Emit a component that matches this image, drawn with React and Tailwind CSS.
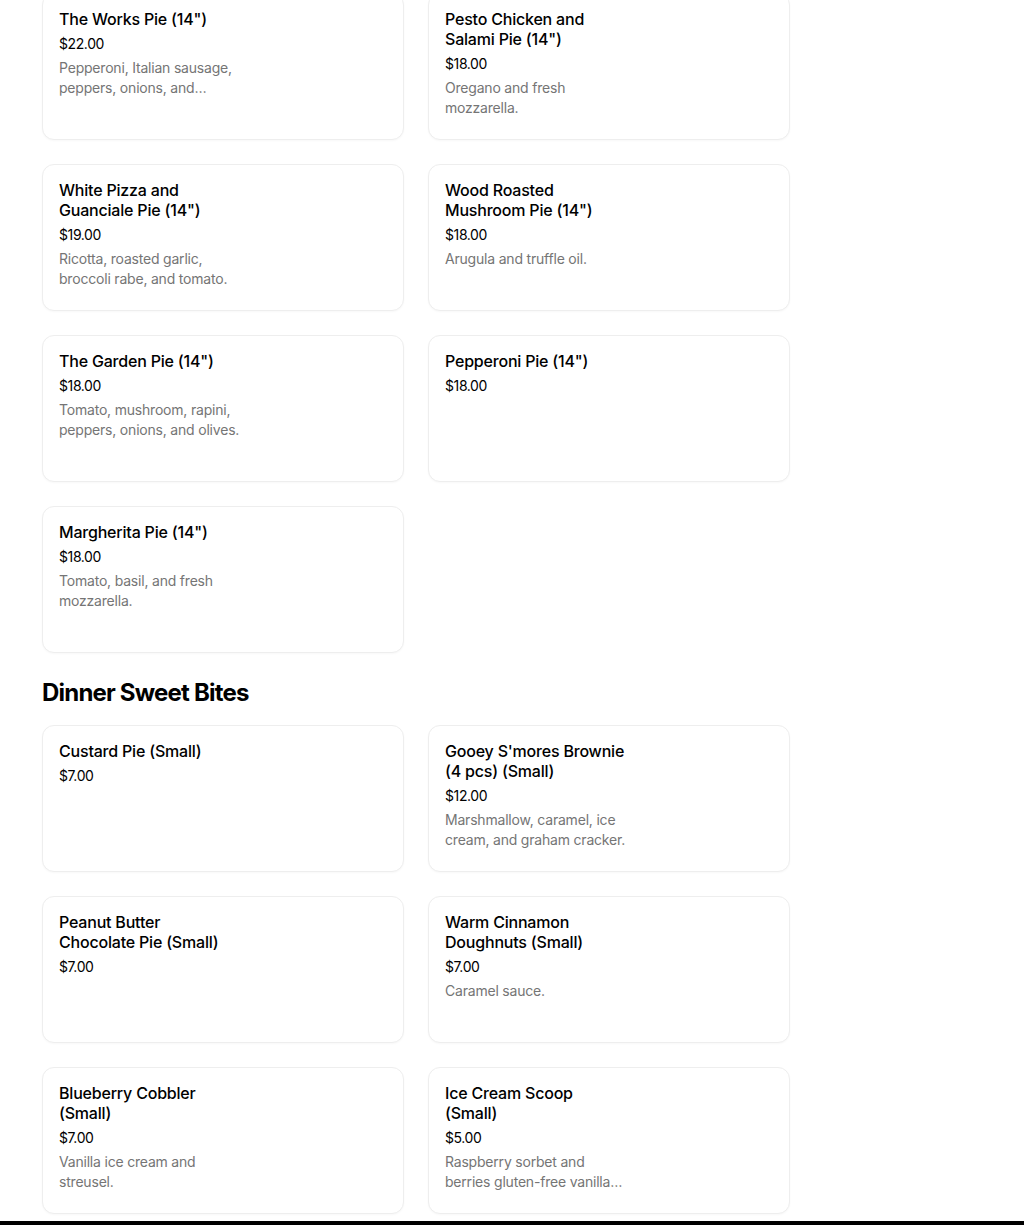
import React from 'react';

const pies = [
  { name: 'The Works Pie (14")', price: '$22.00', desc: 'Pepperoni, Italian sausage, peppers, onions, and mushrooms.' },
  { name: 'Pesto Chicken and Salami Pie (14")', price: '$18.00', desc: 'Oregano and fresh mozzarella.' },
  { name: 'White Pizza and Guanciale Pie (14")', price: '$19.00', desc: 'Ricotta, roasted garlic, broccoli rabe, and tomato.' },
  { name: 'Wood Roasted Mushroom Pie (14")', price: '$18.00', desc: 'Arugula and truffle oil.' },
  { name: 'The Garden Pie (14")', price: '$18.00', desc: 'Tomato, mushroom, rapini, peppers, onions, and olives.' },
  { name: 'Pepperoni Pie (14")', price: '$18.00', desc: '' },
  { name: 'Margherita Pie (14")', price: '$18.00', desc: 'Tomato, basil, and fresh mozzarella.' },
];

const sweets = [
  { name: 'Custard Pie (Small)', price: '$7.00', desc: '' },
  { name: "Gooey S'mores Brownie (4 pcs) (Small)", price: '$12.00', desc: 'Marshmallow, caramel, ice cream, and graham cracker.' },
  { name: 'Peanut Butter Chocolate\u00a0Pie (Small)', price: '$7.00', desc: '' },
  { name: 'Warm Cinnamon Doughnuts (Small)', price: '$7.00', desc: 'Caramel sauce.' },
  { name: 'Blueberry Cobbler (Small)', price: '$7.00', desc: 'Vanilla ice cream and streusel.' },
  { name: 'Ice\u00a0Cream\u00a0Scoop (Small)', price: '$5.00', desc: 'Raspberry sorbet and berries gluten-free vanilla ice cream.' },
];

function ItemCard({ item }) {
  return (
    <div className="h-[147px] rounded-xl border border-[#eeeeee] bg-white px-4 pt-[15px] shadow-[0_1px_2px_rgba(0,0,0,0.03)]">
      <div className="w-[183px]">
        <h3 className="text-[16px] leading-5 font-medium tracking-[-0.2px] text-black">{item.name}</h3>
        <p className="mt-[5px] text-[14px] leading-5 tracking-[-0.4px] text-black">{item.price}</p>
        {item.desc && <p className="mt-1 text-[14px] leading-5 tracking-[-0.2px] text-[#757575] line-clamp-2">{item.desc}</p>}
      </div>
    </div>
  );
}

export default function App() {
  return (
    <div className="min-h-[1225px] bg-white overflow-hidden" style={{ fontFamily: 'Inter, "Noto Sans", sans-serif' }}>
      <div className="w-[748px] ml-[42px] mt-[-7px]">
        <div className="grid grid-cols-2 gap-6">
          {pies.map(p => <ItemCard key={p.name} item={p} />)}
        </div>
        <h2 className="mt-6 mb-4 text-[24px] leading-8 font-bold tracking-[-0.8px] text-black">Dinner Sweet Bites</h2>
        <div className="grid grid-cols-2 gap-6">
          {sweets.map(p => <ItemCard key={p.name} item={p} />)}
        </div>
      </div>
      <div className="mt-[7px] h-10 bg-black" />
    </div>
  );
}
